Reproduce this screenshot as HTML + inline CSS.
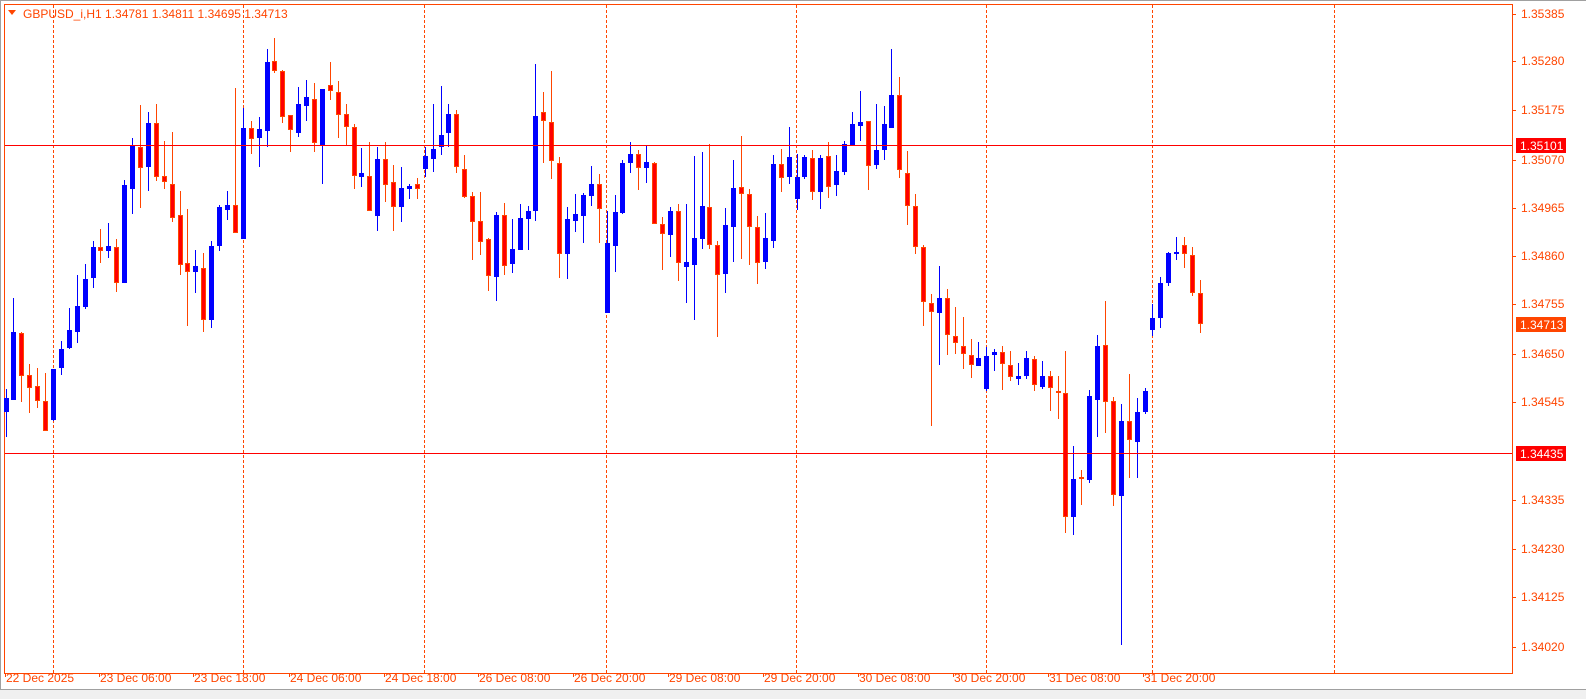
<!DOCTYPE html>
<html><head><meta charset="utf-8">
<style>
html,body{margin:0;padding:0;background:#fff;width:1586px;height:699px;overflow:hidden}
svg{display:block}
text{font-family:"Liberation Sans",sans-serif;font-size:12px;fill:#ff4500}
</style></head>
<body>
<svg id="s" width="1586" height="699" xmlns="http://www.w3.org/2000/svg">
<rect x="0" y="0" width="1586" height="699" fill="#fff"/>
<rect x="0" y="689" width="1586" height="10" fill="#f0f0f0"/>
<line x1="0" y1="0.5" x2="1586" y2="0.5" stroke="#a0a0a0"/>
<line x1="0.5" y1="0" x2="0.5" y2="689" stroke="#a0a0a0"/>
<line x1="0" y1="689.5" x2="1586" y2="689.5" stroke="#a0a0a0"/>
<rect x="4.5" y="4.5" width="1508" height="669" fill="none" stroke="#ff4500"/>
<g stroke="#ff4500" stroke-dasharray="3,2">
<line x1="53.5" y1="5" x2="53.5" y2="673"/><line x1="243.5" y1="5" x2="243.5" y2="673"/>
<line x1="424.5" y1="5" x2="424.5" y2="673"/><line x1="606.5" y1="5" x2="606.5" y2="673"/>
<line x1="796.5" y1="5" x2="796.5" y2="673"/><line x1="986.5" y1="5" x2="986.5" y2="673"/>
<line x1="1152.5" y1="5" x2="1152.5" y2="673"/><line x1="1334.5" y1="5" x2="1334.5" y2="673"/>
</g>
<g id="c"></g>
<line x1="5" y1="145.5" x2="1512" y2="145.5" stroke="#ff0000"/>
<line x1="5" y1="453.5" x2="1512" y2="453.5" stroke="#ff0000"/>
<polygon points="8,10 16,10 12,15" fill="#ff4500"/>
<text x="23" y="18">GBPUSD_i,H1  1.34781 1.34811 1.34695 1.34713</text>
<g stroke="#ff4500">
<line x1="1512" y1="14.5" x2="1516" y2="14.5"/><line x1="1512" y1="61.5" x2="1516" y2="61.5"/>
<line x1="1512" y1="110.5" x2="1516" y2="110.5"/><line x1="1512" y1="160.5" x2="1516" y2="160.5"/>
<line x1="1512" y1="208.5" x2="1516" y2="208.5"/><line x1="1512" y1="256.5" x2="1516" y2="256.5"/>
<line x1="1512" y1="304.5" x2="1516" y2="304.5"/><line x1="1512" y1="354.5" x2="1516" y2="354.5"/>
<line x1="1512" y1="402.5" x2="1516" y2="402.5"/><line x1="1512" y1="500.5" x2="1516" y2="500.5"/>
<line x1="1512" y1="549.5" x2="1516" y2="549.5"/><line x1="1512" y1="597.5" x2="1516" y2="597.5"/>
<line x1="1512" y1="647.5" x2="1516" y2="647.5"/>
</g>
<text x="1521" y="18">1.35385</text><text x="1521" y="65">1.35280</text>
<text x="1521" y="114">1.35175</text><text x="1521" y="164">1.35070</text>
<text x="1521" y="212">1.34965</text><text x="1521" y="260">1.34860</text>
<text x="1521" y="308">1.34755</text><text x="1521" y="358">1.34650</text>
<text x="1521" y="406">1.34545</text><text x="1521" y="504">1.34335</text>
<text x="1521" y="553">1.34230</text><text x="1521" y="601">1.34125</text>
<text x="1521" y="651">1.34020</text>
<rect x="1516" y="138" width="50" height="15" fill="#ff0000"/>
<text x="1520" y="150" style="fill:#fff">1.35101</text>
<rect x="1516" y="317" width="50" height="15" fill="#ff4500"/>
<text x="1520" y="329" style="fill:#fff">1.34713</text>
<rect x="1516" y="446" width="50" height="15" fill="#ff0000"/>
<text x="1520" y="458" style="fill:#fff">1.34435</text>
<g stroke="#ff4500">
<line x1="5.5" y1="673" x2="5.5" y2="677"/><line x1="99.5" y1="673" x2="99.5" y2="677"/>
<line x1="193.5" y1="673" x2="193.5" y2="677"/><line x1="289.5" y1="673" x2="289.5" y2="677"/>
<line x1="384.5" y1="673" x2="384.5" y2="677"/><line x1="478.5" y1="673" x2="478.5" y2="677"/>
<line x1="573.5" y1="673" x2="573.5" y2="677"/><line x1="668.5" y1="673" x2="668.5" y2="677"/>
<line x1="763.5" y1="673" x2="763.5" y2="677"/><line x1="858.5" y1="673" x2="858.5" y2="677"/>
<line x1="953.5" y1="673" x2="953.5" y2="677"/><line x1="1048.5" y1="673" x2="1048.5" y2="677"/>
<line x1="1143.5" y1="673" x2="1143.5" y2="677"/>
</g>
<text x="6" y="682">22 Dec 2025</text><text x="100" y="682">23 Dec 06:00</text>
<text x="194" y="682">23 Dec 18:00</text><text x="290" y="682">24 Dec 06:00</text>
<text x="385" y="682">24 Dec 18:00</text><text x="479" y="682">26 Dec 08:00</text>
<text x="574" y="682">26 Dec 20:00</text><text x="669" y="682">29 Dec 08:00</text>
<text x="764" y="682">29 Dec 20:00</text><text x="859" y="682">30 Dec 08:00</text>
<text x="954" y="682">30 Dec 20:00</text><text x="1049" y="682">31 Dec 08:00</text>
<text x="1144" y="682">31 Dec 20:00</text>
</svg>
<script>
var d=[
"b 398 412 389 437","b 332 400 298 400","r 333 376 332 402","r 375 388 364 413","r 386 401 368 408",
"r 401 431 373 431","b 369 420 369 421","b 349 368 341 375","b 330 348 308 349","b 306 332 275 343",
"b 279 307 264 309","b 247 278 241 288","r 247 251 229 263","b 246 251 223 258","r 247 283 239 292",
"b 185 283 180 283","b 146 189 138 214","r 147 168 105 208","b 123 167 112 191","r 123 177 104 181",
"r 176 182 141 189","r 184 218 132 222","r 215 265 191 275","r 263 272 209 326","b 266 272 250 293",
"r 268 320 253 332","b 246 320 241 328","b 207 246 205 251","b 205 210 191 220","r 205 233 88 233",
"b 128 239 108 239","r 128 139 121 154","b 129 138 117 167","b 62 131 49 147","r 61 71 38 73",
"r 71 117 70 123","r 115 130 115 152","b 104 133 87 137","b 97 106 80 121","r 99 143 83 152",
"b 89 145 89 184","r 85 91 62 100","r 92 115 81 138","r 114 127 104 145","r 127 176 124 189",
"b 173 177 148 187","r 176 211 142 211","b 159 216 147 231","r 159 185 142 202","r 182 207 165 231",
"b 188 207 167 222","b 186 189 184 199","r 184 189 178 199","b 156 169 147 177","b 149 159 104 172",
"b 135 147 86 155","b 114 133 104 147","r 114 167 110 173","r 169 197 155 198","r 196 222 192 260",
"r 221 242 192 255","r 239 276 238 291","b 215 277 212 301","r 215 266 203 275","b 249 264 219 273",
"b 218 250 204 250","b 211 219 206 250","b 116 211 64 221","r 112 121 92 163","r 122 161 71 179",
"r 163 254 157 278","b 219 254 207 279","b 214 221 194 232","b 195 216 193 243","b 184 196 166 206",
"r 184 209 174 243","b 243 313 211 313","b 212 246 195 272","b 163 213 160 214","b 154 163 142 173",
"r 154 168 150 190","b 162 168 146 183","r 163 224 162 224","r 224 234 217 270","b 211 235 207 257",
"r 211 263 204 281","b 262 267 204 303","b 238 265 156 320","b 206 239 152 249","r 207 245 144 249",
"r 245 275 241 337","b 225 274 208 293","b 188 227 160 262","r 187 194 136 259","r 194 227 189 265",
"r 227 263 216 284","b 238 262 213 269","b 164 241 155 248","r 164 178 149 192","b 157 177 127 184",
"b 177 199 154 210","b 157 177 155 179","r 158 192 150 200","b 158 192 155 209","r 156 187 142 198",
"b 171 185 155 196","b 144 172 141 175","b 124 145 112 146","b 122 126 91 141","r 121 166 121 190",
"b 150 165 104 169","b 124 150 106 160","b 95 128 49 128","r 95 170 77 178","r 173 206 151 225",
"r 206 247 194 254","r 247 302 245 326","r 303 312 294 426","b 298 313 266 365","r 298 335 289 355",
"r 336 343 307 354","r 346 354 317 369","r 355 365 339 378","b 358 366 342 366","b 356 389 347 391",
"b 352 355 349 371","r 352 364 346 390","r 365 377 351 381","b 376 379 363 385","b 358 376 351 379",
"r 359 385 356 391","b 376 387 361 389","r 376 388 371 411","r 391 393 376 419","r 393 517 351 533",
"b 479 517 446 535","r 477 479 470 505","b 396 480 390 483","b 346 400 335 437","r 345 402 301 433",
"r 401 495 397 506","b 421 496 404 645","r 421 440 374 478","b 412 442 398 478","b 391 412 388 414",
"b 318 330 304 336","b 283 318 277 328","b 253 283 252 286","b 252 253 237 260","r 245 254 237 268",
"r 255 293 247 296","r 293 324 280 333"];
var g=document.getElementById("c"),h="";
for(var i=0;i<d.length;i++){var p=d[i].split(" "),t=p[0],a=+p[1],b=+p[2],w1=+p[3],w2=+p[4];
var x=Math.round(5.5+i*7.91);var wc=t=="b"?"#0000ff":"#ff4500";
h+='<line x1="'+(x+0.5)+'" y1="'+w1+'" x2="'+(x+0.5)+'" y2="'+w2+'" stroke="'+wc+'"/>';
if(b-a<2)b=a+2;
if(t=="b")h+='<rect x="'+(x-2)+'" y="'+a+'" width="5" height="'+(b-a)+'" fill="#0000ff"/>';
else h+='<rect x="'+(x-1.5)+'" y="'+(a+0.5)+'" width="4" height="'+(b-a-1)+'" fill="#ff0000" stroke="#ff4500"/>';}
g.innerHTML=h;
</script>
</body></html>
